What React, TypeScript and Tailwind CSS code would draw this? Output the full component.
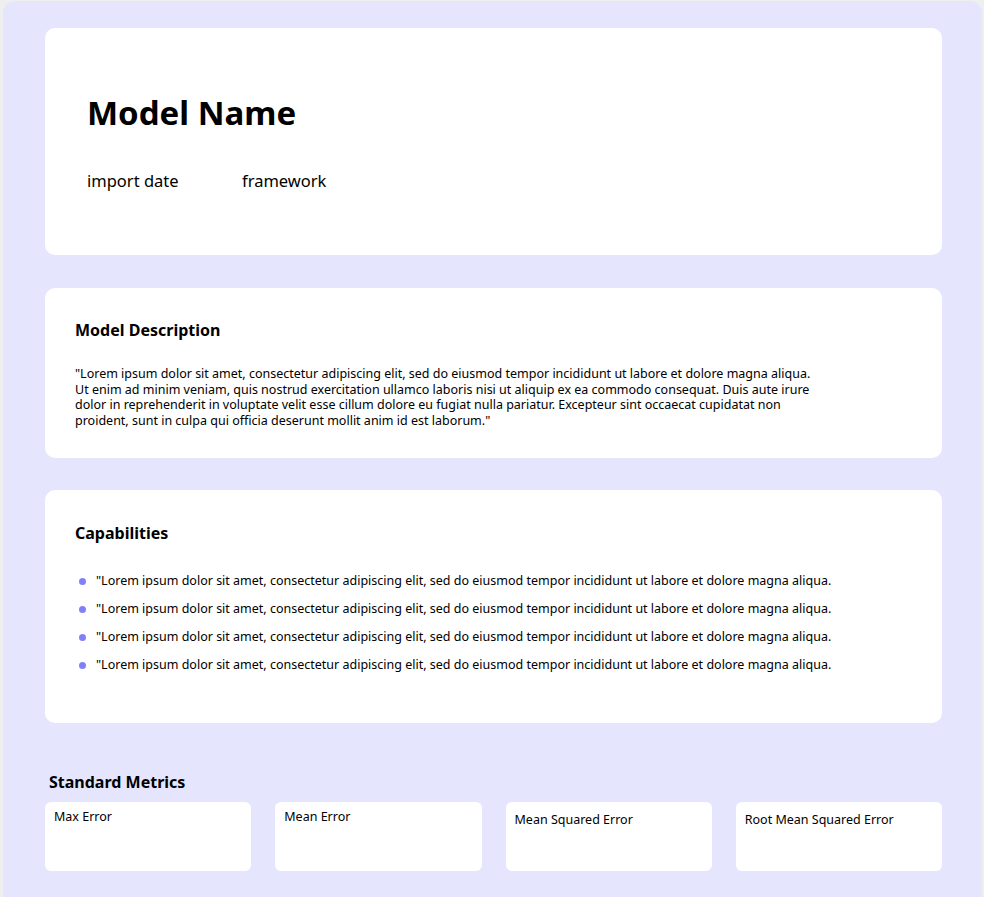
const lorem =
  '"Lorem ipsum dolor sit amet, consectetur adipiscing elit, sed do eiusmod tempor incididunt ut labore et dolore magna aliqua. Ut enim ad minim veniam, quis nostrud exercitation ullamco laboris nisi ut aliquip ex ea commodo consequat. Duis aute irure dolor in reprehenderit in voluptate velit esse cillum dolore eu fugiat nulla pariatur. Excepteur sint occaecat cupidatat non proident, sunt in culpa qui officia deserunt mollit anim id est laborum."';

const capability =
  '"Lorem ipsum dolor sit amet, consectetur adipiscing elit, sed do eiusmod tempor incididunt ut labore et dolore magna aliqua.';

const metrics = [
  { label: "Max Error", pt: "pt-[7px]" },
  { label: "Mean Error", pt: "pt-[7px]" },
  { label: "Mean Squared Error", pt: "pt-[10px]" },
  { label: "Root Mean Squared Error", pt: "pt-[10px]" },
];

export default function App() {
  return (
    <div
      className="min-h-[897px] bg-[#efefef] pl-[3px] pr-[2px] pt-px text-black"
      style={{ fontFamily: '"Noto Sans", "Open Sans", sans-serif' }}
    >
      <div className="min-h-[896px] rounded-t-[12px] bg-[#e5e6fe] pl-[42px] pr-[40px] pt-[27px]">
        {/* header card */}
        <section className="h-[227px] rounded-[10px] bg-white pl-[42px] pt-[63px]">
          <h1 className="text-[33px] font-bold leading-[44px]">Model Name</h1>
          <div className="mt-[34px] flex text-[16.5px] leading-6">
            <span className="w-[155px]">import date</span>
            <span>framework</span>
          </div>
        </section>

        {/* description */}
        <section className="mt-[33px] h-[170px] rounded-[10px] bg-white pl-[30px] pt-[30px]">
          <h2 className="text-[16px] font-bold leading-6">Model Description</h2>
          <p className="mt-[24px] max-w-[746px] text-[12.5px] leading-[15.7px]">{lorem}</p>
        </section>

        {/* capabilities */}
        <section className="mt-[32px] h-[233px] rounded-[10px] bg-white pl-[30px] pt-[31px]">
          <h2 className="text-[16px] font-bold leading-6">Capabilities</h2>
          <ul className="mt-[28px] flex flex-col gap-[12px]">
            {[0, 1, 2, 3].map((i) => (
              <li key={i} className="flex items-center gap-[10px] pl-[4px] text-[12.5px] leading-4">
                <span className="h-[7px] w-[7px] shrink-0 rounded-full bg-[#8280f6]" />
                <span>{capability}</span>
              </li>
            ))}
          </ul>
        </section>

        {/* metrics */}
        <h2 className="mt-[47px] pl-[4px] text-[16px] font-bold leading-6">Standard Metrics</h2>
        <div className="mt-[8px] grid grid-cols-4 gap-x-[24px]">
          {metrics.map((m) => (
            <div key={m.label} className={`h-[69px] rounded-[6px] bg-white px-[9px] text-[12.5px] leading-4 ${m.pt}`}>
              {m.label}
            </div>
          ))}
        </div>
      </div>
    </div>
  );
}
